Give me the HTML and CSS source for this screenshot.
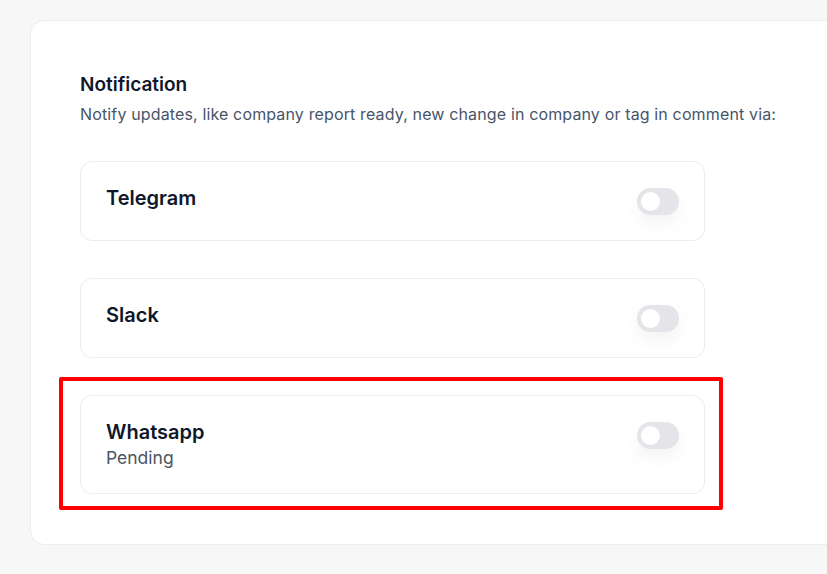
FILE: index.html
```html
<!DOCTYPE html>
<html lang="en">
<head>
  <meta charset="UTF-8" />
  <meta name="viewport" content="width=device-width, initial-scale=1.0"/>
  <title>Notification settings</title>
  <link rel="stylesheet" href="styles.css">
</head>
<body>
  <div class="card">
    <h2>Notification</h2>
    <p class="desc">Notify updates, like company report ready, new change in company or tag in comment via:</p>

    <div class="channels">
      <div class="channel">
        <div class="info">
          <div class="name">Telegram</div>
        </div>
        <span class="toggle"><span class="knob"></span></span>
      </div>

      <div class="channel">
        <div class="info">
          <div class="name">Slack</div>
        </div>
        <span class="toggle"><span class="knob"></span></span>
      </div>

      <div class="channel marked">
        <div class="info">
          <div class="name">Whatsapp</div>
          <div class="status">Pending</div>
        </div>
        <span class="toggle"><span class="knob"></span></span>
      </div>
    </div>
  </div>
</body>
</html>
```

FILE: styles.css
```css
body {
  margin: 0;
  padding: 20px 0 0 30px;
  background: #f7f7f7;
  font-family: Inter, 'Noto Sans', sans-serif;
  color: #0f172a;
  overflow: hidden;
}
.card {
  width: 830px;
  height: 525px;
  box-sizing: border-box;
  background: #fff;
  border: 1px solid #ededed;
  border-radius: 14px;
  padding: 52px 49px 0;
}
h2 {
  margin: 0;
  font-size: 19px;
  line-height: 24px;
  font-weight: 600;
  color: #0f172a;
}
.desc {
  margin: 6px 0 0;
  font-size: 16px;
  letter-spacing: 0.14px;
  line-height: 22px;
  color: #475569;
  white-space: nowrap;
}
.channels {
  margin-top: 36px;
  width: 625px;
  display: flex;
  flex-direction: column;
  gap: 37px;
}
.channel {
  position: relative;
  display: flex;
  justify-content: space-between;
  align-items: flex-start;
  min-height: 80px;
  box-sizing: border-box;
  padding: 22px 25px 23px 25px;
  border: 1px solid #ececef;
  border-radius: 12px;
  background: #fff;
}
.channel.marked::after {
  content: "";
  position: absolute;
  left: -22px;
  right: -19px;
  top: -19px;
  bottom: -17px;
  border: 4px solid #ff0000;
  border-radius: 2px;
}
.name {
  font-size: 20px;
  line-height: 28px;
  font-weight: 600;
  color: #0f172a;
}
.status {
  font-size: 17.5px;
  line-height: 24px;
  color: #4b5563;
}
.toggle {
  margin-top: 4px;
  width: 42px;
  height: 27px;
  border-radius: 14px;
  background: #e4e4e9;
  box-shadow: 0 8px 18px rgba(0, 0, 0, 0.05);
  display: flex;
  align-items: center;
  padding-left: 4px;
  box-sizing: border-box;
}
.knob {
  width: 19px;
  height: 19px;
  border-radius: 50%;
  background: #fff;
}
```
